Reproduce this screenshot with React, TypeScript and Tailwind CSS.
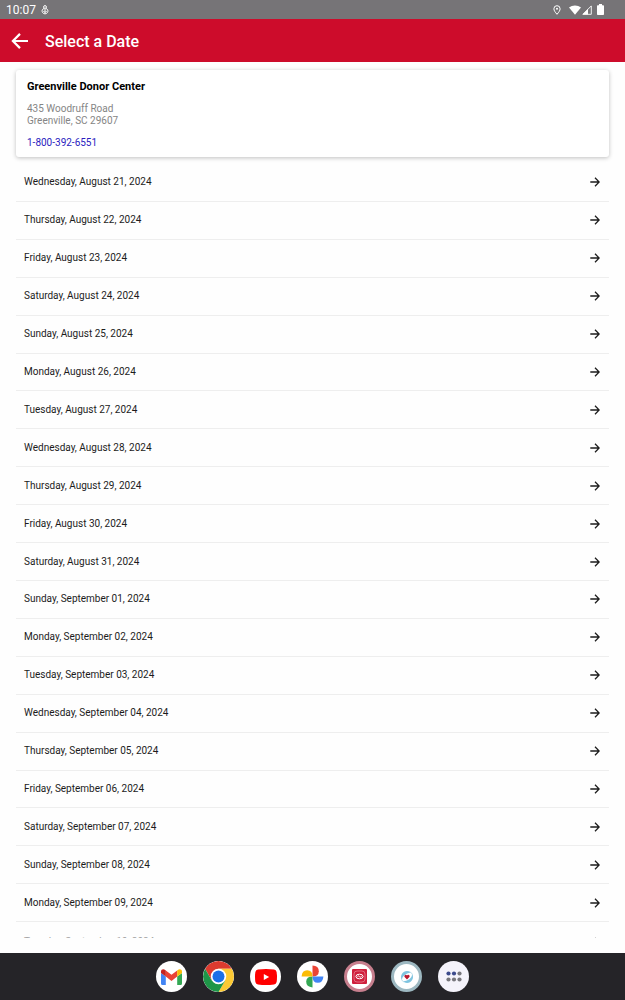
import React from "react";

const dates: string[] = [
  "Wednesday, August 21, 2024",
  "Thursday, August 22, 2024",
  "Friday, August 23, 2024",
  "Saturday, August 24, 2024",
  "Sunday, August 25, 2024",
  "Monday, August 26, 2024",
  "Tuesday, August 27, 2024",
  "Wednesday, August 28, 2024",
  "Thursday, August 29, 2024",
  "Friday, August 30, 2024",
  "Saturday, August 31, 2024",
  "Sunday, September 01, 2024",
  "Monday, September 02, 2024",
  "Tuesday, September 03, 2024",
  "Wednesday, September 04, 2024",
  "Thursday, September 05, 2024",
  "Friday, September 06, 2024",
  "Saturday, September 07, 2024",
  "Sunday, September 08, 2024",
  "Monday, September 09, 2024",
];

function StatusBar() {
  return (
    <div className="flex h-[19px] shrink-0 items-center justify-between bg-[#767477] pl-[6px] pr-[21px] text-white">
      <div className="flex items-center gap-[5px]">
        <span className="pt-px text-[12px] leading-[18px]">10:07</span>
        <svg width="8" height="10" viewBox="0 0 8 10" fill="none" stroke="currentColor" strokeWidth="1">
          <circle cx="4" cy="2" r="1.4" />
          <path d="M2.8 3.2 1.2 5.2a2.9 2.9 0 1 0 5.6 0L5.2 3.2" />
          <path d="M4 4v3.5M2.4 6 4 7.7 5.6 6" />
        </svg>
      </div>
      <div className="flex items-center">
        <svg width="8" height="10" viewBox="0 0 8 10" fill="none" stroke="currentColor" strokeWidth="1" className="mr-[8px]">
          <path d="M4 9.3C2.2 7.2.9 5.5.9 3.8a3.1 3.1 0 0 1 6.2 0C7.1 5.5 5.8 7.2 4 9.3Z" />
          <circle cx="4" cy="3.8" r="1" fill="currentColor" stroke="none" />
        </svg>
        <svg width="12" height="10" viewBox="0 0 12 10" fill="currentColor" className="mr-[1px]">
          <path d="M6 9.8 0 2.6C3.4-.3 8.600-.3 12 2.6Z" />
        </svg>
        <svg width="10" height="10" viewBox="0 0 10 10" className="mr-[5px]">
          <path d="M.9 9.3 9.3.9v8.400Z" fill="none" stroke="currentColor" strokeWidth="0.9" />
          <path d="M.5 9.500 6 4v5.500Z" fill="currentColor" />
        </svg>
        <svg width="7" height="11" viewBox="0 0 7 11" fill="currentColor">
          <path d="M2 0h3v1.200h1.200q.8 0 .8.800v8.200q0 .8-.8.800H.8q-.8 0-.8-.8V2q0-.8.8-.8H2Z" />
        </svg>
      </div>
    </div>
  );
}

function Header() {
  return (
    <header className="flex h-[43px] shrink-0 items-center gap-[16px] bg-[#cd0c2b] pl-[11px] text-white">
      <button type="button" aria-label="Back" className="block">
        <svg width="18" height="16" viewBox="0 0 18 16" fill="none" stroke="currentColor" strokeWidth="2.2">
          <path d="M17 8H2M9 .9 1.9 8 9 15.1" />
        </svg>
      </button>
      <h1 className="pt-[2px] text-[16px] font-medium leading-[20px]">Select a Date</h1>
    </header>
  );
}

function RowArrow() {
  return (
    <svg width="10" height="10" viewBox="0 0 10 10" fill="none" stroke="currentColor" strokeWidth="1.3" className="shrink-0">
      <path d="M.3 5h8.700M5 .8 9.200 5 5 9.200" />
    </svg>
  );
}

function DateRow({ label, faded = false }: { label: string; faded?: boolean }) {
  return (
    <button
      type="button"
      className={`flex flex-1 items-center justify-between pl-[8px] pr-[9px] text-left ${faded ? "text-[#a3a3a3]" : "text-[#1c1c1c]"}`}
    >
      <span className="text-[10px] leading-[12px]">{label}</span>
      <RowArrow />
    </button>
  );
}

function GmailIcon() {
  return (
    <svg width="21" height="16" viewBox="0 0 21 16">
      <path d="M0 2.500V14.500Q0 16 1.500 16H4.800V7.600L0 4Z" fill="#4285f4" />
      <path d="M21 2.500V14.500Q21 16 19.500 16H16.200V7.600L21 4Z" fill="#34a853" />
      <path d="M4.800 1.500 10.500 5.800 16.200 1.500V7.600L10.500 11.900 4.800 7.600Z" fill="#ea4335" />
      <path d="M0 2.500C0 .2 2.500-.6 4.200.9L4.800 1.500V7.600L0 4Z" fill="#c5221f" />
      <path d="M21 2.500C21 .2 18.500-.6 16.800.9L16.200 1.500V7.600L21 4Z" fill="#fbbc04" />
    </svg>
  );
}

function ChromeIcon() {
  return (
    <svg width="31" height="31" viewBox="-15.500 -15.500 31 31">
      <path d="M-13.420-7.750A15.500 15.500 0 0 1 13.420-7.750L0-7.750-6.710 3.880Z" fill="#dc3b2f" />
      <path d="M13.420-7.750A15.500 15.500 0 0 1 0 15.500L6.710 3.880 0-7.750Z" fill="#fcc934" />
      <path d="M0 15.500A15.500 15.500 0 0 1-13.420-7.750L-6.710 3.880H6.710Z" fill="#1e9648" />
      <circle r="7.750" fill="#fff" />
      <circle r="6" fill="#1a6fe8" />
    </svg>
  );
}

function YouTubeIcon() {
  return (
    <svg width="22" height="16" viewBox="0 0 22 16">
      <path d="M3 .6Q11-.4 19 .6 21.200.9 21.600 3 22.400 8 21.600 13 21.200 15.100 19 15.400 11 16.400 3 15.400.8 15.100.4 13-.4 8 .4 3 .8.9 3 .6Z" fill="#f00" />
      <path d="M8.800 5v6L14.200 8Z" fill="#fff" />
    </svg>
  );
}

function PhotosIcon() {
  return (
    <svg width="23" height="23" viewBox="0 0 23 23">
      <path d="M11.500.6q6.300.4 6.300 5.600 0 5.300-6.300 5.300Z" fill="#ea4335" />
      <path d="M22.400 11.500q-.4 6.300-5.600 6.300-5.300 0-5.300-6.300Z" fill="#4285f4" />
      <path d="M11.500 22.400q-6.300-.4-6.300-5.600 0-5.300 6.300-5.300Z" fill="#34a853" />
      <path d="M.6 11.500q.4-6.300 5.600-6.300 5.300 0 5.300 6.300Z" fill="#fbbc04" />
    </svg>
  );
}

function DonorIcon() {
  return (
    <svg width="15" height="15" viewBox="0 0 15 15">
      <rect width="15" height="15" rx="1" fill="#cf1f3c" />
      <rect x="2" y="2" width="11" height="11" rx="3" fill="none" stroke="#e98a99" strokeWidth="0.7" />
      <ellipse cx="7.500" cy="7.500" rx="3.600" ry="2.300" fill="none" stroke="#fff" strokeWidth="1" />
      <path d="M5.400 7.700q1-1.500 2.100 0t2.100-.6" fill="none" stroke="#fff" strokeWidth="0.9" />
    </svg>
  );
}

function CareIcon() {
  return (
    <svg width="12" height="12" viewBox="0 0 12 12" fill="none">
      <path d="M6 0A6 6 0 0 0 .7 8.800Q1.500 3 9.800 1.400 8.300 0 6 0Z" fill="#7fc4e0" />
      <path d="M6 12A6 6 0 0 0 11.300 3.200Q10.500 9 2.200 10.600 3.700 12 6 12Z" fill="#7fc4e0" />
      <path d="M9 1q2 .8 2.500 2.800M3 11Q1 10.200.5 8.200" stroke="#b9ddeb" strokeWidth="1" />
      <path d="M6 8.600 3.600 6.100A1.400 1.400 0 0 1 6 4.500a1.400 1.400 0 0 1 2.400 1.600Z" fill="#b9182f" />
    </svg>
  );
}

function AppsIcon() {
  return (
    <svg width="16" height="11" viewBox="0 0 16 11">
      <circle cx="2.500" cy="2.500" r="2.100" fill="#3c4a8c" />
      <circle cx="8" cy="2.500" r="2.100" fill="#3c4a8c" />
      <circle cx="13.500" cy="2.500" r="2.100" fill="#77767c" />
      <circle cx="2.500" cy="8.500" r="2.100" fill="#77767c" />
      <circle cx="8" cy="8.500" r="2.100" fill="#77767c" />
      <circle cx="13.500" cy="8.500" r="2.100" fill="#77767c" />
    </svg>
  );
}

const dockApps: { name: string; icon: React.ReactNode; look: string }[] = [
  { name: "Gmail", icon: <GmailIcon />, look: "bg-white" },
  { name: "Chrome", icon: <ChromeIcon />, look: "bg-white" },
  { name: "YouTube", icon: <YouTubeIcon />, look: "bg-white" },
  { name: "Photos", icon: <PhotosIcon />, look: "bg-white" },
  { name: "Blood Donor", icon: <DonorIcon />, look: "bg-white border-[3px] border-[#c77f8e]" },
  { name: "Care", icon: <CareIcon />, look: "bg-white border-[3px] border-[#9db8c1]" },
  { name: "All apps", icon: <AppsIcon />, look: "bg-[#f5f3fb]" },
];

function Dock() {
  return (
    <nav className="flex h-[47px] shrink-0 items-center justify-center gap-[16px] bg-[#252428]">
      {dockApps.map((app) => (
        <button
          key={app.name}
          type="button"
          aria-label={app.name}
          className={`flex size-[31px] items-center justify-center overflow-hidden rounded-full ${app.look}`}
        >
          {app.icon}
        </button>
      ))}
    </nav>
  );
}

export default function App() {
  return (
    <div className="flex min-h-screen flex-col bg-[#fefefe] font-[Roboto,sans-serif]">
      <StatusBar />
      <Header />
      <main className="flex flex-1 flex-col px-[16px] pb-[15px] pt-[8px]">
        <section className="rounded-[3px] bg-white px-[11px] pb-[8px] pt-[11px] shadow-[0_1px_4px_rgba(0,0,0,0.25)]">
          <h2 className="text-[11px] font-bold leading-[12px] text-black">Greenville Donor Center</h2>
          <address className="mt-[10px] text-[10px] not-italic leading-[12px] text-[#858585]">
            435 Woodruff Road
            <br />
            Greenville, SC 29607
          </address>
          <a href="tel:18003926551" className="mt-[10px] block text-[10px] leading-[12px] text-[#2a1cc0]">
            1-800-392-6551
          </a>
        </section>
        <ul className="mt-[7px] flex flex-1 flex-col">
          {dates.map((date) => (
            <li key={date} className="flex min-h-[36px] flex-1 border-b border-[#eeeeee]">
              <DateRow label={date} />
            </li>
          ))}
          <li className="h-[16px] shrink-0 overflow-hidden">
            <div className="flex h-[40px]">
              <DateRow label="Tuesday, September 10, 2024" faded />
            </div>
          </li>
        </ul>
      </main>
      <Dock />
    </div>
  );
}
